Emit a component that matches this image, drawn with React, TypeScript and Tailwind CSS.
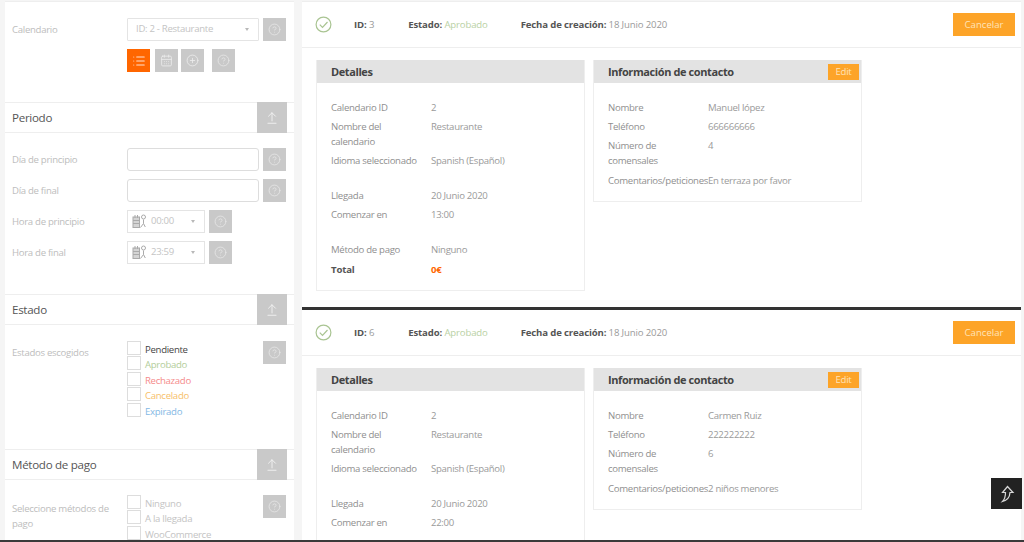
import { ReactNode } from "react";
import { ArrowUpFromLine, CalendarDays, CircleHelp, CirclePlus, List } from "lucide-react";

const DETAILS_ROWS = (time: string): [string, string][] => [
  ["Calendario ID", "2"],
  ["Nombre del\ncalendario", "Restaurante"],
  ["Idioma seleccionado", "Spanish (Español)"],
  ["", ""],
  ["Llegada", "20 Junio 2020"],
  ["Comenzar en", time],
  ["", ""],
  ["Método de pago", "Ninguno"],
];

const ESTADOS = [
  { label: "Pendiente", color: "text-[#444444]" },
  { label: "Aprobado", color: "text-[#b3cd9a]" },
  { label: "Rechazado", color: "text-[#f58b8b]" },
  { label: "Cancelado", color: "text-[#f7c06a]" },
  { label: "Expirado", color: "text-[#84b8e4]" },
];

const METODOS = ["Ninguno", "A la llegada", "WooCommerce"];

function HelpButton() {
  return (
    <button className="w-[23px] h-[23px] shrink-0 bg-[#c9c9c9] flex items-center justify-center text-[#e6e6e6]">
      <CircleHelp size={13} strokeWidth={1.5} />
    </button>
  );
}

function SectionHeader({ title }: { title: string }) {
  return (
    <div className="h-[31px] border-y border-[#eeeeee] flex items-center justify-between pr-[7px]">
      <span className="text-[11.6px] text-[#555555] pl-[7px]">{title}</span>
      <button className="w-[30px] h-[31px] bg-[#c9c9c9] flex items-center justify-center text-[#f4f4f4]">
        <ArrowUpFromLine size={14} strokeWidth={1.5} />
      </button>
    </div>
  );
}

function FormRow({ label, children }: { label: string; children: ReactNode }) {
  return (
    <div className="h-[23px] flex items-center pl-[7px]">
      <span className="w-[115px] shrink-0 text-[9.6px] text-[#bdbdbd] pt-[2px]">{label}</span>
      {children}
    </div>
  );
}

function TimeSelect({ value }: { value: string }) {
  return (
    <>
      <div className="w-[78px] h-[23px] border border-[#e4e4e4] flex items-center pl-[4px] pr-[9px] text-[9.6px] text-[#c4c4c4]">
        <svg width="15" height="15" viewBox="0 0 15 15" fill="none" stroke="#aaaaaa" strokeWidth="1">
          <rect x="1" y="3" width="6.5" height="10.5" fill="#d4d4d4" />
          <path d="M3 1v3M5.5 1v3M1 6.5h6.5M1 9.5h6.5" />
          <circle cx="11.5" cy="3" r="2" />
          <path d="M11.5 5.5v4l-3 4M11.5 9.5l1.8 3.5" />
        </svg>
        <span className="ml-[4px]">{value}</span>
        <span className="ml-auto w-0 h-0 border-x-[2px] border-x-transparent border-t-[3px] border-t-[#b8b8b8]" />
      </div>
      <div className="ml-[4px]">
        <HelpButton />
      </div>
    </>
  );
}

function CheckItem({ label, color }: { label: string; color: string }) {
  return (
    <div className="h-[15.4px] flex items-start">
      <span className="w-[14px] h-[14px] border border-[#dddddd] bg-white shrink-0" />
      <span className={`ml-[4px] text-[9.6px] leading-[15px] pt-[1px] ${color}`}>{label}</span>
    </div>
  );
}

function Sidebar() {
  return (
    <aside className="w-[289px] ml-[5px] shrink-0 bg-white border-t border-[#eeeeee] overflow-hidden">
      <div className="h-[100px] pt-[16px]">
        <FormRow label="Calendario">
          <div className="w-[132px] h-[23px] border border-[#e4e4e4] flex items-center pl-[8px] pr-[9px] text-[9.6px] text-[#c4c4c4] rounded-[1px]">
            <span>ID: 2 - Restaurante</span>
            <span className="ml-auto w-0 h-0 border-x-[2px] border-x-transparent border-t-[3px] border-t-[#b8b8b8]" />
          </div>
          <div className="ml-[4px]">
            <HelpButton />
          </div>
        </FormRow>
        <div className="flex mt-[8px] ml-[122px]">
          <button className="w-[23px] h-[23px] bg-[#ff6600] flex items-center justify-center text-[#ffe2cf]">
            <List size={14} strokeWidth={1.75} />
          </button>
          <button className="ml-[5px] w-[23px] h-[23px] bg-[#c9c9c9] flex items-center justify-center text-[#ececec]">
            <CalendarDays size={13} strokeWidth={1.5} />
          </button>
          <button className="ml-[3px] w-[23px] h-[23px] bg-[#c9c9c9] flex items-center justify-center text-[#ececec]">
            <CirclePlus size={13} strokeWidth={1.5} />
          </button>
          <div className="ml-[8px]">
            <HelpButton />
          </div>
        </div>
      </div>

      <SectionHeader title="Periodo" />
      <div className="h-[161px] pt-[15px] flex flex-col gap-[8px]">
        <FormRow label="Día de principio">
          <div className="w-[132px] h-[23px] border border-[#dddddd] rounded-[3px]" />
          <div className="ml-[4px]">
            <HelpButton />
          </div>
        </FormRow>
        <FormRow label="Día de final">
          <div className="w-[132px] h-[23px] border border-[#dddddd] rounded-[3px]" />
          <div className="ml-[4px]">
            <HelpButton />
          </div>
        </FormRow>
        <FormRow label="Hora de principio">
          <TimeSelect value="00:00" />
        </FormRow>
        <FormRow label="Hora de final">
          <TimeSelect value="23:59" />
        </FormRow>
      </div>

      <SectionHeader title="Estado" />
      <div className="h-[124px] pt-[16px] pl-[7px] flex items-start">
        <span className="w-[115px] shrink-0 text-[9.6px] text-[#bdbdbd] mt-[5px]">Estados escogidos</span>
        <div className="w-[136px] flex flex-col">
          {ESTADOS.map((e) => (
            <CheckItem key={e.label} label={e.label} color={e.color} />
          ))}
        </div>
        <HelpButton />
      </div>

      <SectionHeader title="Método de pago" />
      <div className="pt-[15px] pl-[7px] flex items-start">
        <span className="w-[115px] shrink-0 text-[9.6px] leading-[15px] text-[#bdbdbd] pr-[4px] mt-[6px]">
          Seleccione métodos de pago
        </span>
        <div className="w-[136px] flex flex-col">
          {METODOS.map((m) => (
            <CheckItem key={m} label={m} color="text-[#c4c4c4]" />
          ))}
        </div>
        <HelpButton />
      </div>
    </aside>
  );
}

function InfoRow({ label, value }: { label: string; value: string }) {
  return (
    <div className="flex min-h-[19.4px] text-[9.6px] leading-[15px] pb-[4.4px]">
      <span className="w-[100px] shrink-0 text-[#8f8f8f] whitespace-pre">{label}</span>
      <span className="text-[#9a9a9a] whitespace-nowrap">{value}</span>
    </div>
  );
}

function CardTitle({ title, edit }: { title: string; edit?: boolean }) {
  return (
    <div className="h-[23px] bg-[#e3e3e3] flex items-center pl-[14px] pr-[2px]">
      <span className="text-[11px] font-bold text-[#444444] tracking-[-0.4px] pt-[2px]">{title}</span>
      {edit && (
        <button className="ml-auto w-[31px] h-[16px] bg-[#fda428] text-[9.6px] leading-none text-[#ffe3b8]">Edit</button>
      )}
    </div>
  );
}

type Booking = { id: number; time: string; name: string; phone: string; guests: string; comment: string };

function BookingItem({ b, first }: { b: Booking; first?: boolean }) {
  return (
    <section className={first ? "h-[305px]" : ""}>
      <div className="h-[46px] border-b border-[#eeeeee] flex items-center pl-[13px] pr-[6px] text-[9.6px]">
        <svg width="17" height="17" viewBox="0 0 17 17" fill="none" stroke="#a9c492" strokeWidth="1.2">
          <circle cx="8.5" cy="8.5" r="7.4" />
          <path d="M4.8 8.6l2.7 2.8 5-5.4" />
        </svg>
        <span className="ml-[22px] pt-[2px] font-bold text-[#555555] tracking-[-0.15px]">
          ID: <span className="font-normal text-[#9a9a9a]">{b.id}</span>
        </span>
        <span className="ml-[34px] pt-[2px] font-bold text-[#555555] tracking-[-0.15px]">
          Estado: <span className="font-normal text-[#b9d1a4]">Aprobado</span>
        </span>
        <span className="ml-[33px] pt-[2px] font-bold text-[#555555] tracking-[-0.15px]">
          Fecha de creación: <span className="font-normal text-[#9a9a9a]">18 Junio 2020</span>
        </span>
        <button className="ml-auto mt-[-1px] pt-[2px] w-[62px] h-[23px] bg-[#fda428] text-[9.6px] tracking-normal text-[#ffe3b8]">
          Cancelar
        </button>
      </div>
      <div className="flex gap-[8px] pl-[14px] pt-[12px]">
        <div className="w-[269px] h-[231px] border border-t-0 border-[#eeeeee]">
          <CardTitle title="Detalles" />
          <div className="pl-[14px] pt-[16.5px]">
            {DETAILS_ROWS(b.time).map(([label, value], i) =>
              label ? (
                <InfoRow key={label} label={label} value={value} />
              ) : (
                <div key={i} className={i === 6 ? "h-[16px]" : "h-[15px]"} />
              ),
            )}
            <div className="flex text-[9.6px] leading-[15px] font-bold tracking-[-0.15px]">
              <span className="w-[100px] text-[#555555]">Total</span>
              <span className="text-[#ff6600]">0€</span>
            </div>
          </div>
        </div>
        <div className="w-[269px] h-[142px] border border-t-0 border-[#eeeeee]">
          <CardTitle title="Información de contacto" edit />
          <div className="pl-[14px] pt-[16.5px]">
            <InfoRow label="Nombre" value={b.name} />
            <InfoRow label="Teléfono" value={b.phone} />
            <InfoRow label={"Número de\ncomensales"} value={b.guests} />
            <InfoRow label="Comentarios/peticiones" value={b.comment} />
          </div>
        </div>
      </div>
    </section>
  );
}

export default function App() {
  return (
    <div className="relative w-[1024px] h-[542px] overflow-hidden bg-[#f5f5f5] flex flex-col font-['Open_Sans',sans-serif] tracking-[-0.3px]">
      <div className="h-[540px] flex pt-px">
        <Sidebar />
        <main className="ml-[8px] w-[719px] shrink-0 bg-white border-t border-[#eeeeee] overflow-hidden">
          <BookingItem
            first
            b={{ id: 3, time: "13:00", name: "Manuel lópez", phone: "666666666", guests: "4", comment: "En terraza por favor" }}
          />
          <div className="h-[3px] bg-[#333333]" />
          <BookingItem
            b={{ id: 6, time: "22:00", name: "Carmen Ruiz", phone: "222222222", guests: "6", comment: "2 niños menores" }}
          />
        </main>
      </div>
      <div className="h-[2px] bg-[#3a3a3a]" />

      {/* scroll to top */}
      <button className="absolute left-[991px] top-[478px] w-[31px] h-[31px] bg-[#222222] flex items-center justify-center">
        <svg width="16" height="18" viewBox="0 0 16 18" fill="none" stroke="#d8d8d8" strokeWidth="1.2">
          <path d="M8.5 1.5 14 7.5h-3c-.2 4-2 7.5-7.5 9 2-2 3-5 3-9H3.5z" />
        </svg>
      </button>
    </div>
  );
}
